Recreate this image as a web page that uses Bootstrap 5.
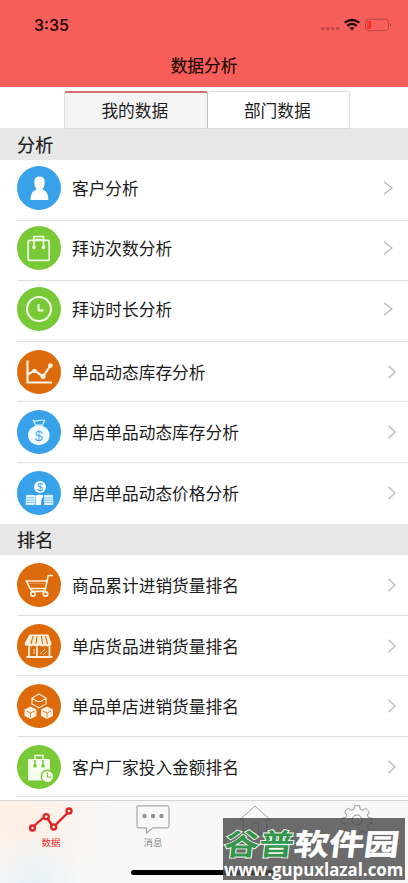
<!DOCTYPE html>
<html lang="zh-CN">
<head>
<meta charset="utf-8">
<meta name="viewport" content="width=device-width, initial-scale=1">
<title>数据分析</title>
<link href="https://cdn.jsdelivr.net/npm/bootstrap@5.3.0/dist/css/bootstrap.min.css" rel="stylesheet">
<style>
body{font-family:"Noto Sans CJK SC",sans-serif;color:#1c1c1c;background:#fff;height:883px;overflow:hidden}
svg{display:block;flex:none}
.app-screen{width:408px;height:883px}
.app-head{height:87px;background:#f85f5a;color:#1d0706}
.status-line{height:50px;padding:0 17px 0 34px}
.clock-text{font:500 16px/1 Inter,sans-serif;-webkit-text-stroke:.1px}
.page-title{font-size:16.7px;font-weight:400;line-height:30px;-webkit-text-stroke:.2px}
.switch-row{height:41px;padding:4px 58px 0 64px}
.switch-tabs{width:286px}
.switch-tabs .nav-link{height:38px;padding:0;border:1px solid #dedcdd;border-radius:3px 3px 0 0;color:#1c1c1c;font-size:16.7px;line-height:37px;background:#fff}
.switch-tabs .nav-link.active{background:#f4f4f4;border-top:2px solid #d3716f;border-right-color:#c6b9ba;line-height:35px;padding-right:2px}
.switch-tabs .nav-link:not(.active){border-left:0;padding-right:2px}
.group-title{height:32px;padding-left:17px;background:#e7e7e7;font-size:18.2px;font-weight:400;line-height:33px;-webkit-text-stroke:.2px}
.group-title.second{height:31px;line-height:31px;margin-top:1px}
.entry{height:60.5px;margin-left:17px;padding-right:11px;padding-top:1px;border-bottom:1px solid #dfdfe0;font-size:16.7px;line-height:24px}
.entry.up{padding-right:15px;padding-top:0;padding-bottom:4px}
.entry.no-line{border-bottom-color:transparent}
.entry.last-line{margin-bottom:3px}
.entry .label-text{margin-left:11px}
.bottom-bar{height:83px;border-top:1px solid #d4d4d4;background:radial-gradient(circle at 35px 82px,#e6f2f9 0,transparent 50px),radial-gradient(circle at 20px 15px,#fdeee2 0,transparent 90px),#f8f8f8;font-size:9.5px;line-height:14px;color:#8c8c8c}
.bottom-bar .nav-link{width:102px;padding:4px 0 0;color:#8c8c8c}
.bottom-bar .nav-link.active{color:#e32f32}
.home-line{left:131px;top:870px;width:146px;height:5px;border-radius:3px;background:#000}
.site-mark{left:223px;top:818px;width:182px;height:62px;background:rgba(76,76,76,.82);color:#fff}
.site-name{font-size:35px;font-weight:700;line-height:42px;height:43px;padding-left:2px;transform:skewX(-7deg) scaleY(.84);white-space:nowrap;padding-top:4px;-webkit-text-stroke:.6px #fff}
.site-name span{color:#33964b;-webkit-text-stroke:2px #fff;paint-order:stroke fill}
.site-url{font:700 17px/18px "Open Sans",sans-serif;white-space:nowrap;width:200px;transform:scaleX(.99);transform-origin:0 0;padding-left:1px}
</style>
<script src="https://cdn.jsdelivr.net/npm/bootstrap@5.3.0/dist/js/bootstrap.bundle.min.js"></script>
</head>
<body>
<svg width="0" height="0" class="position-absolute"><defs>
<symbol id="thin-arrow" viewBox="0 0 10 14"><path d="M1 1l8 6-8 6" fill="none" stroke="#b3b3b3" stroke-width="1.1"/></symbol>
<symbol id="bold-arrow" viewBox="0 0 10 14"><path d="M1.500.8L8 7l-6.500 6.200" fill="none" stroke="#c5c5c7" stroke-width="1.700"/></symbol>
</defs></svg>
<main class="app-screen position-relative overflow-hidden">
<header class="app-head">
<div class="status-line d-flex align-items-center justify-content-between">
<span class="clock-text">3:35</span>
<svg width="70" height="16" viewBox="0 0 70 16"><g fill="#c44b49"><rect y="10" width="3.500" height="3.300" rx="1"/><rect x="5" y="10" width="3.500" height="3.300" rx="1"/><rect x="10" y="10" width="3.500" height="3.300" rx="1"/><rect x="15" y="10" width="3.500" height="3.300" rx="1"/></g><g fill="none" stroke="#210807" stroke-width="2.300"><path d="M23.700 5.700Q31 .2 38.300 5.700M26.300 8.800Q31 5 35.700 8.800"/></g><path d="M28.500 11q2.500-2 5 0L31 13.600z" fill="#210807"/><rect x="44.500" y="2.200" width="23" height="11.500" rx="3" fill="none" stroke="#b84947"/><rect x="46.200" y="4" width="4" height="8" rx="1" fill="#fc2f28"/><path d="M69 6q1.500 2 0 4z" fill="#8b3533"/></svg>
</div>
<h1 class="page-title text-center m-0">数据分析</h1>
</header>
<div class="switch-row"><nav class="nav nav-justified switch-tabs flex-nowrap"><a class="nav-link active">我的数据</a><a class="nav-link">部门数据</a></nav></div>
<h2 class="group-title mb-0">分析</h2>
<div>
<div class="entry up d-flex align-items-center"><svg width="44" height="44" viewBox="0 0 44 44"><circle cx="22" cy="22" r="22" fill="#37a2e9"/><path d="M13.500 34q-.7-8 6-10.500Q17.200 21 17.200 16q0-5.500 5.300-5.500T27.700 16q0 5-2.200 7.500 6.500 2.500 5.800 10.500z" fill="#fff"/></svg><span class="label-text">客户分析</span><svg class="ms-auto" width="10" height="14"><use href="#thin-arrow"/></svg></div>
<div class="entry up d-flex align-items-center"><svg width="44" height="44" viewBox="0 0 44 44"><circle cx="22" cy="22" r="22" fill="#77c936"/><g fill="none" stroke="#f2fde8" stroke-width="1.700"><rect x="11.200" y="14.300" width="21" height="20" rx="1"/><path d="M17 21v-10.500h9.500V21M18.500 13.500h6.500"/></g><g fill="#f2fde8"><circle cx="17" cy="21.500" r="1.800"/><circle cx="26.500" cy="21.500" r="1.800"/></g></svg><span class="label-text">拜访次数分析</span><svg class="ms-auto" width="10" height="14"><use href="#thin-arrow"/></svg></div>
<div class="entry up d-flex align-items-center"><svg width="44" height="44" viewBox="0 0 44 44"><circle cx="22" cy="22" r="22" fill="#77c936"/><circle cx="22" cy="22" r="12" fill="none" stroke="#f2fde8" stroke-width="2.100"/><path d="M21.500 17v6.500h5" fill="none" stroke="#f2fde8" stroke-width="1.900"/></svg><span class="label-text">拜访时长分析</span><svg class="ms-auto" width="10" height="14"><use href="#thin-arrow"/></svg></div>
<div class="entry d-flex align-items-center"><svg width="44" height="44" viewBox="0 0 44 44"><circle cx="22" cy="22" r="22" fill="#dd6b0c"/><path d="M10.500 10.500v22H35M11.500 24l6-3.500 8.500 6 7.500-11" fill="none" stroke="#fff4e5" stroke-width="2.200"/><g fill="#fff4e5"><circle cx="17.500" cy="21" r="2.200"/><circle cx="26" cy="26.500" r="2.500"/><circle cx="33.500" cy="15.500" r="2.300"/></g></svg><span class="label-text">单品动态库存分析</span><svg class="ms-auto" width="10" height="14"><use href="#bold-arrow"/></svg></div>
<div class="entry d-flex align-items-center"><svg width="44" height="44" viewBox="0 0 44 44"><circle cx="22" cy="22" r="22" fill="#37a2e9"/><path d="M16.500 10.500q2.500 1 5.500 0t5.500 0L25.500 15h-7z" fill="none" stroke="#e9f8ff" stroke-width="1.200"/><ellipse cx="21.800" cy="25.200" rx="10.800" ry="10" fill="#f2fbff"/><text x="21.800" y="30.500" text-anchor="middle" font-family="Liberation Sans,sans-serif" font-size="14.500" fill="#4dabe9">$</text></svg><span class="label-text">单店单品动态库存分析</span><svg class="ms-auto" width="10" height="14"><use href="#bold-arrow"/></svg></div>
<div class="entry no-line d-flex align-items-center"><svg width="44" height="44" viewBox="0 0 44 44"><circle cx="22" cy="22" r="22" fill="#37a2e9"/><circle cx="23" cy="16" r="6" fill="#f2fbff"/><text x="23" y="19.600" text-anchor="middle" font-family="Liberation Sans,sans-serif" font-size="10" fill="#37a2e9">$</text><path d="M9 24.200q4.500-1 9 0v9.500q-5 .8-9.500 0zM27 24.200q4.500-1 9 0l.4 9.500q-5 .8-9.400 0z" fill="#e0f3ff"/><path d="M8.500 26.800h9M8.500 29.200h9M8.500 31.600h9M27 26.800h9M27 29.200h9M27 31.600h9" stroke="#37a2e9" stroke-width=".6"/><path d="M18.300 24.500q4-1.500 8.200 0-2.500 3.500-2.700 9.500h-5z" fill="#fff"/></svg><span class="label-text">单店单品动态价格分析</span><svg class="ms-auto" width="10" height="14"><use href="#bold-arrow"/></svg></div>
</div>
<h2 class="group-title second mb-0">排名</h2>
<div>
<div class="entry d-flex align-items-center"><svg width="44" height="44" viewBox="0 0 44 44"><circle cx="22" cy="22" r="22" fill="#dd6b0c"/><g fill="none" stroke="#fff1df" stroke-width="1.700"><path d="M36 12.500h-4.800l-3.400 15.800H15.500L13 25.500M29.800 18H9.500l3.600 7.500h15.400"/><circle cx="16" cy="31" r="2.200"/><circle cx="28.500" cy="31" r="2.200"/></g><path d="M12 20.500h16" stroke="#e68c46" stroke-width="1"/></svg><span class="label-text">商品累计进销货量排名</span><svg class="ms-auto" width="10" height="14"><use href="#bold-arrow"/></svg></div>
<div class="entry d-flex align-items-center"><svg width="44" height="44" viewBox="0 0 44 44"><circle cx="22" cy="22" r="22" fill="#dd6b0c"/><path d="M12.500 10.500h19l3 9q-.5 3-3 3t-3-1q-1.500 1-3 1t-3-1q-1.500 1-3 1t-3-1q-1.500 1-3 1t-3-1q-3 1-3-2z" fill="#fff0dd"/><path d="M16 12l-2 8M20 12l-1 8M24.500 12l1 8M28.500 12l2 8" stroke="#dd6b0c" stroke-width="1.100"/><path d="M12 22.500v9.500M32.500 22.500v9.500M9.500 33h26M20 23v9.500" stroke="#fff0dd" stroke-width="1.800"/><path d="M17 25v5M23 30l5-5M26 31l4-4" stroke="#fff0dd" stroke-width=".8"/></svg><span class="label-text">单店货品进销货量排名</span><svg class="ms-auto" width="10" height="14"><use href="#bold-arrow"/></svg></div>
<div class="entry d-flex align-items-center"><svg width="44" height="44" viewBox="0 0 44 44"><circle cx="22" cy="22" r="22" fill="#dd6b0c"/><path d="M22 10l7 4v6l-7 3.700-7-3.700v-6zM15 14l5 3.500h4l5-3.500" fill="none" stroke="#ffe9d1" stroke-width="1.200"/><path d="M13.500 22.500l6 3v6.500l-6 3-6-3v-6.500zM30 22.500l6 3v6.500l-6 3-6-3v-6.500z" fill="#fff0df"/><path d="M9.500 27l4 2 4-2M13.500 29v4.500M26 27l4 2 4-2M30 29v4.500" fill="none" stroke="#dd6b0c" stroke-width=".8"/></svg><span class="label-text">单品单店进销货量排名</span><svg class="ms-auto" width="10" height="14"><use href="#bold-arrow"/></svg></div>
<div class="entry last-line d-flex align-items-center"><svg width="44" height="44" viewBox="0 0 44 44"><circle cx="22" cy="22" r="22" fill="#77c936"/><rect x="11" y="14" width="22" height="21.500" rx="1" fill="#f5fdec"/><path d="M18 14v-3.500h8V14" fill="none" stroke="#f5fdec" stroke-width="1.500"/><path d="M18 15v6M26 15v6" stroke="#77c936" stroke-width="1.500"/><g fill="#77c936"><circle cx="18" cy="21" r="1.700"/><circle cx="26" cy="21" r="1.700"/></g><circle cx="30.500" cy="31.500" r="6.200" fill="#f5fdec" stroke="#77c936" stroke-width="1.400"/><path d="M30.500 27.500v4.500h4" fill="none" stroke="#77c936" stroke-width="1.200"/></svg><span class="label-text">客户厂家投入金额排名</span><svg class="ms-auto" width="10" height="14"><use href="#bold-arrow"/></svg></div>
</div>
<nav class="bottom-bar nav flex-nowrap align-items-start">
<a class="nav-link active d-flex flex-column align-items-center"><svg width="46" height="30" viewBox="0 0 46 30"><g fill="none" stroke="#df2024" stroke-width="2.300"><path d="M6 21l9-8M19.500 13.500l4 6M28 19.500L39.500 8"/><circle cx="4.500" cy="23" r="2.500"/><circle cx="18.200" cy="11.700" r="2.500"/><circle cx="25.700" cy="22" r="2.500"/><circle cx="41" cy="6" r="2.500"/></g></svg><span>数据</span></a>
<a class="nav-link d-flex flex-column align-items-center"><svg width="34" height="30" viewBox="0 0 34 30"><path d="M2.500.8h29Q33 .8 33 2.300v19q0 1.500-1.500 1.500H17L10.500 28v-5.200h-8Q1 22.800 1 21.300v-19Q1 .8 2.500.8z" fill="none" stroke="#a7a7a7" stroke-width="1.200"/><g fill="#929292"><circle cx="8.500" cy="11" r="2.200"/><circle cx="17" cy="11" r="2.200"/><circle cx="25.500" cy="11" r="2.200"/></g></svg><span>消息</span></a>
<a class="nav-link d-flex flex-column align-items-center"><svg width="34" height="30" viewBox="0 0 34 30"><path d="M1.500 15L17 1l15.500 14h-4v14h-8V18h-7v11h-8V15z" fill="none" stroke="#a0a0a0"/></svg></a>
<a class="nav-link d-flex flex-column align-items-center"><svg width="32" height="30" viewBox="0 0 32 30"><path d="M13.500.7h5l.8 3.600 2.500 1 3-2 3.600 3.500-2 3.200 1 2.400 3.400.8v5l-3.400.8-1 2.400 2 3.200-3.600 3.500-3-2-2.500 1-.8 3h-5l-.8-3-2.500-1-3 2-3.600-3.500 2-3.200-1-2.400-3.400-.8v-5l3.400-.8 1-2.400-2-3.200 3.600-3.500 3 2 2.500-1z" fill="none" stroke="#979797"/><circle cx="16" cy="15" r="5" fill="none" stroke="#979797"/></svg></a>
</nav>
<div class="home-line position-absolute"></div>
<div class="site-mark position-absolute"><div class="site-name"><span>谷普</span>软件园</div><div class="site-url">www.gupuxlazal.com</div></div>
</main>
</body>
</html>
